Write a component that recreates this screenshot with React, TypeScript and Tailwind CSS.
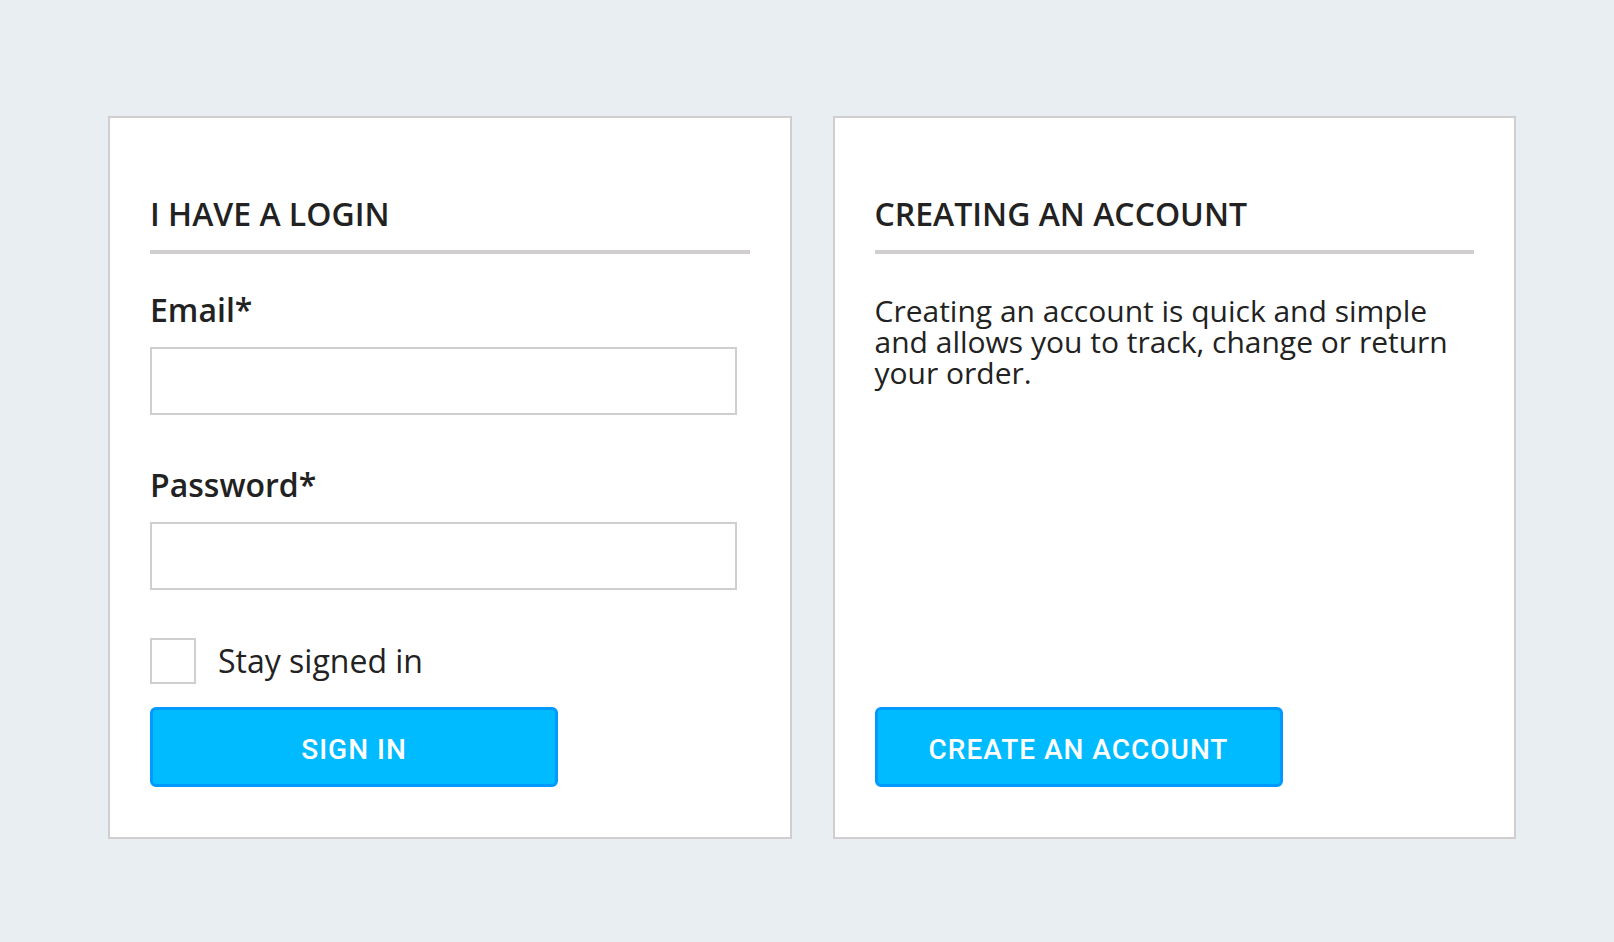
import React from 'react';

const font = "font-['Open_Sans',_'Liberation_Sans',_sans-serif]";

function CardHeading({ children }: { children: React.ReactNode }) {
  return (
    <>
      <h2 className="font-semibold text-[32px] leading-[40px] text-[#222]">{children}</h2>
      <div className="mt-4 h-1 bg-[#d0cece]" />
    </>
  );
}

function Field({ label, type }: { label: string; type: string }) {
  return (
    <div className="flex flex-col">
      <label className="font-semibold text-[32px] leading-[40px] text-[#222]">{label}</label>
      <input
        type={type}
        className="mt-[17px] h-[68px] w-[587px] border-2 border-[#d0cece] bg-white px-3 outline-none"
      />
    </div>
  );
}

function PrimaryButton({ children }: { children: React.ReactNode }) {
  return (
    <button className="h-20 w-[408px] rounded-md border-[3px] border-[#0099ff] bg-[#00bbff] pt-[6px] font-['Roboto',_'Liberation_Sans',_sans-serif] text-[28px] font-medium tracking-[1px] text-white">
      {children}
    </button>
  );
}

export default function App() {
  return (
    <div className={`min-h-screen bg-[#e9eef2] pt-[116px] ${font}`}>
      <div className="ml-[108px] grid w-[1408px] grid-cols-2 gap-[41px]">
        {/* login */}
        <div className="flex flex-col border-2 border-[#d0cece] bg-white px-10 pt-[76px] pb-[50px]">
          <CardHeading>I HAVE A LOGIN</CardHeading>
          <div className="mt-9">
            <Field label="Email*" type="email" />
          </div>
          <div className="mt-[50px]">
            <Field label="Password*" type="password" />
          </div>
          <label className="mt-12 flex items-center gap-[22px]">
            <span className="h-[46px] w-[46px] border-2 border-[#d0cece] bg-white" />
            <span className="text-[32px] leading-[40px] text-[#222]">Stay signed in</span>
          </label>
          <div className="mt-[23px]">
            <PrimaryButton>SIGN IN</PrimaryButton>
          </div>
        </div>

        {/* register */}
        <div className="flex flex-col border-2 border-[#d0cece] bg-white px-10 pt-[76px] pb-[50px]">
          <CardHeading>CREATING AN ACCOUNT</CardHeading>
          <p className="mt-[41px] text-[30px] leading-[31px] text-[#222]">
            Creating an account is quick and simple and allows you to track, change or return your order.
          </p>
          <div className="mt-auto">
            <PrimaryButton>CREATE AN ACCOUNT</PrimaryButton>
          </div>
        </div>
      </div>
    </div>
  );
}
